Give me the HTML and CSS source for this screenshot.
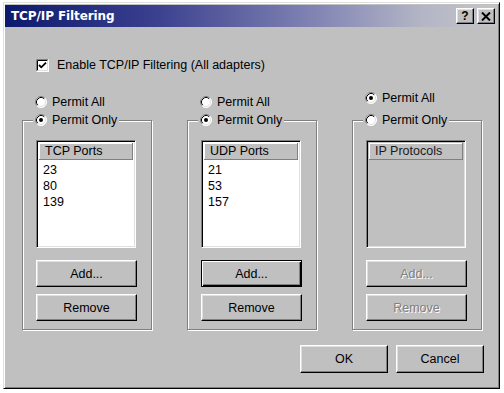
FILE: index.html
```html
<!DOCTYPE html>
<html>
<head>
<meta charset="utf-8">
<title>TCP/IP Filtering</title>
<link rel="stylesheet" href="styles.css">
</head>
<body>
<div class="window">
  <div class="titlebar">
    <span class="title">TCP/IP Filtering</span>
    <div class="tb-buttons">
      <span class="tb-btn tb-help">?</span>
      <span class="tb-btn">
        <svg width="10" height="9" viewBox="0 0 10 9"><path d="M1 0.5 L9 8.5 M9 0.5 L1 8.5" stroke="#000" stroke-width="2" fill="none"/></svg>
      </span>
    </div>
  </div>
  <div class="client">
    <div class="check-row">
      <svg class="checkbox" width="13" height="13" viewBox="0 0 13 13">
        <rect x="0" y="0" width="13" height="13" fill="#fff"/>
        <path d="M0.5 12.5 V0.5 H12.5" stroke="#808080" fill="none"/>
        <path d="M1.5 11.5 V1.5 H11.5" stroke="#000" fill="none"/>
        <path d="M0.5 12.5 H12.5 V0.5" stroke="#fff" fill="none"/>
        <path d="M1.5 11.5 H11.5 V1.5" stroke="#dfdfdf" fill="none"/>
        <path d="M3 6 L5.3 8.3 L10 3.6" stroke="#000" stroke-width="1.8" fill="none"/>
      </svg>
      <span>Enable TCP/IP Filtering (All adapters)</span>
    </div>

    <div class="columns">
      <div class="col">
        <div class="radio">
          <svg class="radio-icon" width="12" height="12" viewBox="0 0 12 12"><circle cx="6" cy="6" r="5.5" fill="#fff"/><path d="M2.11 9.89 A5.5 5.5 0 0 1 9.89 2.11" stroke="#808080" fill="none"/><path d="M9.89 2.11 A5.5 5.5 0 0 1 2.11 9.89" stroke="#fff" fill="none"/><path d="M2.82 9.18 A4.5 4.5 0 0 1 9.18 2.82" stroke="#000" fill="none"/><path d="M9.18 2.82 A4.5 4.5 0 0 1 2.82 9.18" stroke="#dfdfdf" fill="none"/></svg>
          <span>Permit All</span>
        </div>
        <div class="group">
          <div class="radio legend">
            <svg class="radio-icon" width="12" height="12" viewBox="0 0 12 12"><circle cx="6" cy="6" r="5.5" fill="#fff"/><path d="M2.11 9.89 A5.5 5.5 0 0 1 9.89 2.11" stroke="#808080" fill="none"/><path d="M9.89 2.11 A5.5 5.5 0 0 1 2.11 9.89" stroke="#fff" fill="none"/><path d="M2.82 9.18 A4.5 4.5 0 0 1 9.18 2.82" stroke="#000" fill="none"/><path d="M9.18 2.82 A4.5 4.5 0 0 1 2.82 9.18" stroke="#dfdfdf" fill="none"/><circle cx="6" cy="6" r="2" fill="#000"/></svg>
            <span>Permit Only</span>
          </div>
          <div class="listbox">
            <div class="list-header">TCP Ports</div>
            <div class="list-items">
              <div>23</div>
              <div>80</div>
              <div>139</div>
            </div>
          </div>
          <div class="btn btn-add">Add...</div>
          <div class="btn btn-remove">Remove</div>
        </div>
      </div>

      <div class="col">
        <div class="radio">
          <svg class="radio-icon" width="12" height="12" viewBox="0 0 12 12"><circle cx="6" cy="6" r="5.5" fill="#fff"/><path d="M2.11 9.89 A5.5 5.5 0 0 1 9.89 2.11" stroke="#808080" fill="none"/><path d="M9.89 2.11 A5.5 5.5 0 0 1 2.11 9.89" stroke="#fff" fill="none"/><path d="M2.82 9.18 A4.5 4.5 0 0 1 9.18 2.82" stroke="#000" fill="none"/><path d="M9.18 2.82 A4.5 4.5 0 0 1 2.82 9.18" stroke="#dfdfdf" fill="none"/></svg>
          <span>Permit All</span>
        </div>
        <div class="group">
          <div class="radio legend">
            <svg class="radio-icon" width="12" height="12" viewBox="0 0 12 12"><circle cx="6" cy="6" r="5.5" fill="#fff"/><path d="M2.11 9.89 A5.5 5.5 0 0 1 9.89 2.11" stroke="#808080" fill="none"/><path d="M9.89 2.11 A5.5 5.5 0 0 1 2.11 9.89" stroke="#fff" fill="none"/><path d="M2.82 9.18 A4.5 4.5 0 0 1 9.18 2.82" stroke="#000" fill="none"/><path d="M9.18 2.82 A4.5 4.5 0 0 1 2.82 9.18" stroke="#dfdfdf" fill="none"/><circle cx="6" cy="6" r="2" fill="#000"/></svg>
            <span>Permit Only</span>
          </div>
          <div class="listbox">
            <div class="list-header">UDP Ports</div>
            <div class="list-items">
              <div>21</div>
              <div>53</div>
              <div>157</div>
            </div>
          </div>
          <div class="btn btn-default btn-add">Add...</div>
          <div class="btn btn-remove">Remove</div>
        </div>
      </div>

      <div class="col col-ip">
        <div class="radio">
          <svg class="radio-icon" width="12" height="12" viewBox="0 0 12 12"><circle cx="6" cy="6" r="5.5" fill="#fff"/><path d="M2.11 9.89 A5.5 5.5 0 0 1 9.89 2.11" stroke="#808080" fill="none"/><path d="M9.89 2.11 A5.5 5.5 0 0 1 2.11 9.89" stroke="#fff" fill="none"/><path d="M2.82 9.18 A4.5 4.5 0 0 1 9.18 2.82" stroke="#000" fill="none"/><path d="M9.18 2.82 A4.5 4.5 0 0 1 2.82 9.18" stroke="#dfdfdf" fill="none"/><circle cx="6" cy="6" r="2" fill="#000"/></svg>
          <span>Permit All</span>
        </div>
        <div class="group">
          <div class="radio legend">
            <svg class="radio-icon" width="12" height="12" viewBox="0 0 12 12"><circle cx="6" cy="6" r="5.5" fill="#fff"/><path d="M2.11 9.89 A5.5 5.5 0 0 1 9.89 2.11" stroke="#808080" fill="none"/><path d="M9.89 2.11 A5.5 5.5 0 0 1 2.11 9.89" stroke="#fff" fill="none"/><path d="M2.82 9.18 A4.5 4.5 0 0 1 9.18 2.82" stroke="#000" fill="none"/><path d="M9.18 2.82 A4.5 4.5 0 0 1 2.82 9.18" stroke="#dfdfdf" fill="none"/></svg>
            <span>Permit Only</span>
          </div>
          <div class="listbox listbox-disabled">
            <div class="list-header">IP Protocols</div>
            <div class="list-items"></div>
          </div>
          <div class="btn btn-disabled btn-add">Add...</div>
          <div class="btn btn-disabled btn-remove">Remove</div>
        </div>
      </div>
    </div>

    <div class="footer">
      <div class="btn btn-footer">OK</div>
      <div class="btn btn-footer">Cancel</div>
    </div>
  </div>
</div>
</body>
</html>
```

FILE: styles.css
```css
* { box-sizing: border-box; }

html, body {
  margin: 0;
  padding: 0;
  background: #ffffff;
}

body {
  font-family: "Liberation Sans", Arial, sans-serif;
  font-size: 12.5px;
  color: #000;
}

.window {
  width: 497px;
  height: 387px;
  margin: 2px 0 0 3px;
  background: #c0c0c0;
  border: 1px solid;
  border-color: #dfdfdf #000 #000 #dfdfdf;
  box-shadow: inset 1px 1px 0 #fff, inset -1px -1px 0 #808080;
  padding: 2px 2px 2px 1px;
  display: flex;
  flex-direction: column;
}

.titlebar {
  height: 22px;
  flex: none;
  display: flex;
  align-items: center;
  justify-content: space-between;
  padding: 0 2px 0 6px;
  background: linear-gradient(90deg, #0c1a6c 0%, #3a3f8e 30%, #7f82b2 62%, #b4b6c6 85%, #c4c4c8 100%);
}

.title {
  font-family: "DejaVu Sans", Verdana, sans-serif;
  font-weight: bold;
  font-size: 12px;
  color: #fff;
  letter-spacing: -0.1px;
}

.tb-buttons {
  display: flex;
  gap: 3px;
}

.tb-btn {
  width: 18px;
  height: 16px;
  display: flex;
  align-items: center;
  justify-content: center;
  background: #c0c0c0;
  border: 1px solid;
  border-color: #fff #000 #000 #fff;
  box-shadow: inset -1px -1px 0 #808080, inset 1px 1px 0 #dfdfdf;
}

.tb-help {
  font-family: "Liberation Sans", Arial, sans-serif;
  font-weight: bold;
  font-size: 12px;
  line-height: 1;
  color: #000;
}

.client {
  flex: 1;
  display: flex;
  flex-direction: column;
}

.check-row {
  height: 16px;
  margin: 30px 0 0 31px;
  display: flex;
  align-items: center;
  gap: 8px;
}

.checkbox { display: block; flex: none; }

.columns {
  display: grid;
  grid-template-columns: 130px 130px 130px;
  column-gap: 35px;
  margin: 20px 0 0 17px;
}

.col {
  display: flex;
  flex-direction: column;
}

.radio {
  height: 18px;
  display: flex;
  align-items: center;
  gap: 5px;
  padding-left: 13px;
}

.radio-icon { display: block; flex: none; }

.group {
  margin-top: 9px;
  height: 210px;
  border: 1px solid #808080;
  box-shadow: 1px 1px 0 #fff, inset 1px 1px 0 #fff;
  padding: 0 13px;
  display: flex;
  flex-direction: column;
}

.col-ip > .radio { margin-top: -4px; }
.col-ip > .group { margin-top: 13px; }

.legend {
  align-self: flex-start;
  margin: -10px 0 0 -3px;
  padding: 0 2px;
  background: #c0c0c0;
}

.listbox {
  margin-top: 11px;
  width: 100px;
  height: 108px;
  background: #fff;
  border: 1px solid;
  border-color: #808080 #fff #fff #808080;
  box-shadow: inset 1px 1px 0 #000, inset -1px -1px 0 #dfdfdf;
  padding: 2px 2px 2px 2px;
  display: flex;
  flex-direction: column;
}

.listbox-disabled { background: #c0c0c0; }

.list-header {
  height: 17px;
  flex: none;
  display: flex;
  align-items: center;
  padding-left: 6px;
  background: #c0c0c0;
  border-right: 1px solid #808080;
  border-bottom: 1px solid #808080;
  box-shadow: inset 1px 1px 0 #fff;
  color: #000;
}

.listbox-disabled .list-header { color: #1a1a1a; }

.list-items {
  padding: 2px 0 0 4px;
  line-height: 16px;
}

.btn {
  height: 27px;
  display: flex;
  align-items: center;
  justify-content: center;
  background: #c0c0c0;
  border: 1px solid;
  border-color: #fff #000 #000 #fff;
  box-shadow: inset -1px -1px 0 #808080, inset 1px 1px 0 #dfdfdf;
}

.btn-add {
  width: 101px;
  margin-top: 12px;
}

.btn-remove {
  width: 101px;
  margin-top: 7px;
}

.btn-default {
  border-color: #000;
  box-shadow: inset 1px 1px 0 #fff, inset -1px -1px 0 #000, inset -2px -2px 0 #808080;
}

.btn-disabled {
  color: #808080;
  text-shadow: 1px 1px 0 #fff;
}

.footer {
  margin-top: 15px;
  display: flex;
  justify-content: flex-end;
  gap: 8px;
  padding-right: 13px;
}

.btn-footer {
  width: 88px;
  height: 28px;
}
```
